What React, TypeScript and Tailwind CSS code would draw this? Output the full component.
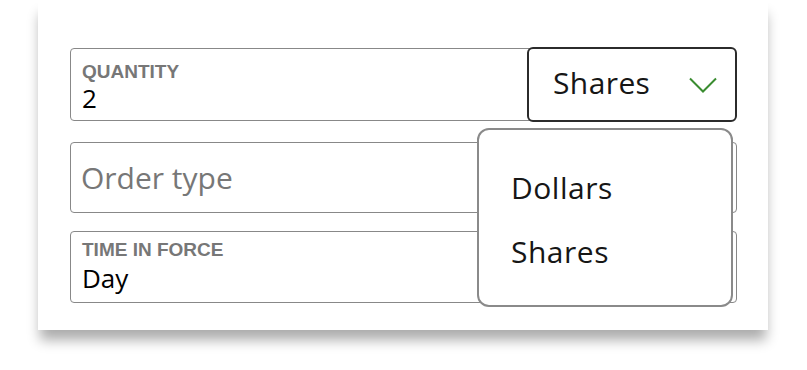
function Label({ children }: { children: string }) {
  return (
    <div className="text-[19px] leading-[22px] font-bold text-[#777] font-['Liberation_Sans',Arial,sans-serif]">
      {children}
    </div>
  )
}

export default function App() {
  return (
    <div className="w-[807px] h-[370px] bg-white overflow-hidden">
      <div className="relative ml-[38px] w-[730px] h-[330px] bg-white shadow-[0_12px_12px_-2px_rgba(0,0,0,0.33)] pt-[47px] pl-[32px] pr-[31px] font-['Open_Sans',sans-serif]">
        {/* ── Quantity + unit select ─────────────────── */}
        <div className="flex items-center">
          <div className="flex-1 h-[73px] border-[1.5px] border-[#888] rounded-l-[4px] pl-[11px] pt-[12px]">
            <Label>QUANTITY</Label>
            <div className="text-[26px] leading-[30px] text-black">2</div>
          </div>
          <button className="relative z-10 -ml-[3px] w-[210px] h-[75px] flex items-center justify-between border-2 border-[#2b2b2b] rounded-[6px] pl-[24px] pr-[18px] pb-[3px] bg-white">
            <span className="text-[30px] leading-none text-[#161616] tracking-[0.4px]">Shares</span>
            <svg width="28" height="16" viewBox="0 0 28 16" fill="none" className="mt-[3px]">
              <polyline points="1,1.5 14,14.5 27,1.5" stroke="#3a8c30" strokeWidth="2" />
            </svg>
          </button>
        </div>

        {/* ── Order type ──────────────────────────────── */}
        <div className="mt-[20px] h-[71px] flex items-center border-[1.5px] border-[#888] rounded-[4px] pl-[10px]">
          <span className="text-[30px] leading-none text-[#777]">Order type</span>
        </div>

        {/* ── Time in force ───────────────────────────── */}
        <div className="mt-[18px] h-[72px] border-[1.5px] border-[#888] rounded-[4px] pl-[11px] pt-[7px]">
          <Label>TIME IN FORCE</Label>
          <div className="mt-[2px] text-[26px] leading-[30px] text-black">Day</div>
        </div>

        {/* ── Open menu ───────────────────────────────── */}
        <ul className="absolute left-[439px] top-[128px] w-[256px] h-[179px] bg-white border-2 border-[#8a8a8a] rounded-[12px] pt-[25px] pl-[32px] text-[30px] text-[#161616] tracking-[0.5px]">
          <li className="h-[64px] flex items-center">Dollars</li>
          <li className="h-[64px] flex items-center">Shares</li>
        </ul>
      </div>
    </div>
  )
}
